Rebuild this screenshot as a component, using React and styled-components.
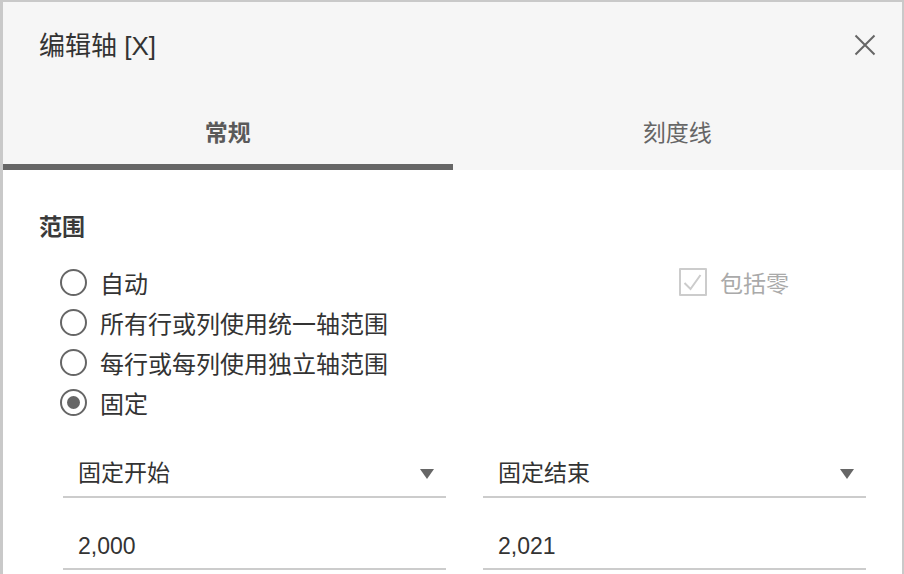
import React, { useState } from "react"
import styled, { createGlobalStyle } from "styled-components"

const GlobalStyle = createGlobalStyle`
	html, body {
		margin: 0;
		padding: 0;
		background: #ffffff;
		overflow: hidden;
	}
	body {
		font-family: "Liberation Sans", "Noto Sans CJK SC", sans-serif;
	}
`

const Dialog = styled.div`
	box-sizing: border-box;
	width: 904px;
	height: 574px;
	overflow: hidden;
	border: 2px solid #c9c9c9;
	border-left-width: 3px;
	border-bottom: none;
	background: #ffffff;
`

const Header = styled.div`
	height: 86px;
	display: flex;
	align-items: center;
	justify-content: space-between;
	padding: 0 26px 0 36px;
	background: #f6f6f6;
`

const Title = styled.h1`
	margin: 0;
	margin-top: -3px;
	font-size: 26px;
	font-weight: 400;
	color: #333333;
`

const CloseButton = styled.button`
	border: none;
	background: none;
	padding: 0;
	width: 22px;
	height: 22px;
	display: flex;
	cursor: pointer;
`

const TabBar = styled.div`
	display: grid;
	grid-template-columns: 1fr 1fr;
	background: #f6f6f6;
`

const Tab = styled.div`
	box-sizing: border-box;
	height: 82px;
	padding-top: 10px;
	display: flex;
	align-items: center;
	justify-content: center;
	font-size: 23px;
	font-weight: ${props => (props.active ? 700 : 400)};
	color: ${props => (props.active ? "#5a5a5a" : "#666666")};
	border-bottom: 6px solid ${props => (props.active ? "#666666" : "transparent")};
	cursor: pointer;
`

const Content = styled.div`
	padding: 42px 36px 0 36px;
`

const SectionTitle = styled.div`
	font-size: 23px;
	line-height: 30px;
	font-weight: 700;
	color: #3a3a3a;
`

const RangeRow = styled.div`
	display: flex;
	align-items: flex-start;
	margin-top: 20px;
	padding-left: 21px;
`

const RadioList = styled.div`
	display: flex;
	flex-direction: column;
`

const OptionRow = styled.label`
	height: 40px;
	display: flex;
	align-items: center;
	gap: 13px;
	font-size: ${props => (props.disabled ? "23px" : "24px")};
	color: ${props => (props.disabled ? "#aaaaaa" : "#333333")};
	cursor: ${props => (props.disabled ? "default" : "pointer")};
`

const RadioCircle = styled.span`
	box-sizing: border-box;
	width: 27px;
	height: 27px;
	border-radius: 50%;
	border: 2px solid #666666;
	display: flex;
	align-items: center;
	justify-content: center;

	&::after {
		content: "";
		width: 13px;
		height: 13px;
		border-radius: 50%;
		background: ${props => (props.checked ? "#666666" : "transparent")};
	}
`

const CheckBox = styled.span`
	box-sizing: border-box;
	width: 28px;
	height: 28px;
	border: 2px solid #cccccc;
	border-radius: 1px;
	display: flex;
`

const ZeroOption = styled.div`
	margin-left: auto;
	margin-right: 77px;
`

const Fields = styled.div`
	display: grid;
	grid-template-columns: 1fr 1fr;
	column-gap: 37px;
	row-gap: 20px;
	margin-top: 24px;
	padding-left: 24px;
`

const Field = styled.div`
	box-sizing: border-box;
	height: 52px;
	display: flex;
	align-items: center;
	justify-content: space-between;
	padding: ${props => (props.input ? "6px 12px 0 15px" : "0 12px 0 15px")};
	border-bottom: 2px solid #cccccc;
	font-size: 23px;
	color: #333333;
	cursor: pointer;
`

const Caret = styled.span`
	width: 0;
	height: 0;
	margin-top: 6px;
	border-left: 7px solid transparent;
	border-right: 7px solid transparent;
	border-top: 10px solid #666666;
`

const options = ["自动", "所有行或列使用统一轴范围", "每行或每列使用独立轴范围", "固定"]

const App = () => {
	const [tab, setTab] = useState(0)
	const [range, setRange] = useState(3)

	return (
		<Dialog>
			<GlobalStyle />
			<Header>
				<Title>编辑轴 [X]</Title>
				<CloseButton aria-label='关闭'>
					<svg width='22' height='22' viewBox='0 0 22 22'>
						<path d='M1.5 1.5 L20.5 20.5 M20.5 1.5 L1.5 20.5' stroke='#666666' strokeWidth='2' fill='none' />
					</svg>
				</CloseButton>
			</Header>
			<TabBar>
				<Tab active={tab === 0} onClick={() => setTab(0)}>
					常规
				</Tab>
				<Tab active={tab === 1} onClick={() => setTab(1)}>
					刻度线
				</Tab>
			</TabBar>
			<Content>
				<SectionTitle>范围</SectionTitle>
				<RangeRow>
					<RadioList>
						{options.map((label, i) => (
							<OptionRow key={label} onClick={() => setRange(i)}>
								<RadioCircle checked={range === i} />
								{label}
							</OptionRow>
						))}
					</RadioList>
					<ZeroOption>
						<OptionRow disabled>
							<CheckBox>
								<svg width='24' height='24' viewBox='0 0 24 24'>
									<path d='M3.5 13 L9.5 19 L19.5 5' stroke='#cccccc' strokeWidth='2' fill='none' />
								</svg>
							</CheckBox>
							包括零
						</OptionRow>
					</ZeroOption>
				</RangeRow>
				<Fields>
					<Field>
						固定开始
						<Caret />
					</Field>
					<Field>
						固定结束
						<Caret />
					</Field>
					<Field input>2,000</Field>
					<Field input>2,021</Field>
				</Fields>
			</Content>
		</Dialog>
	)
}

export default App
